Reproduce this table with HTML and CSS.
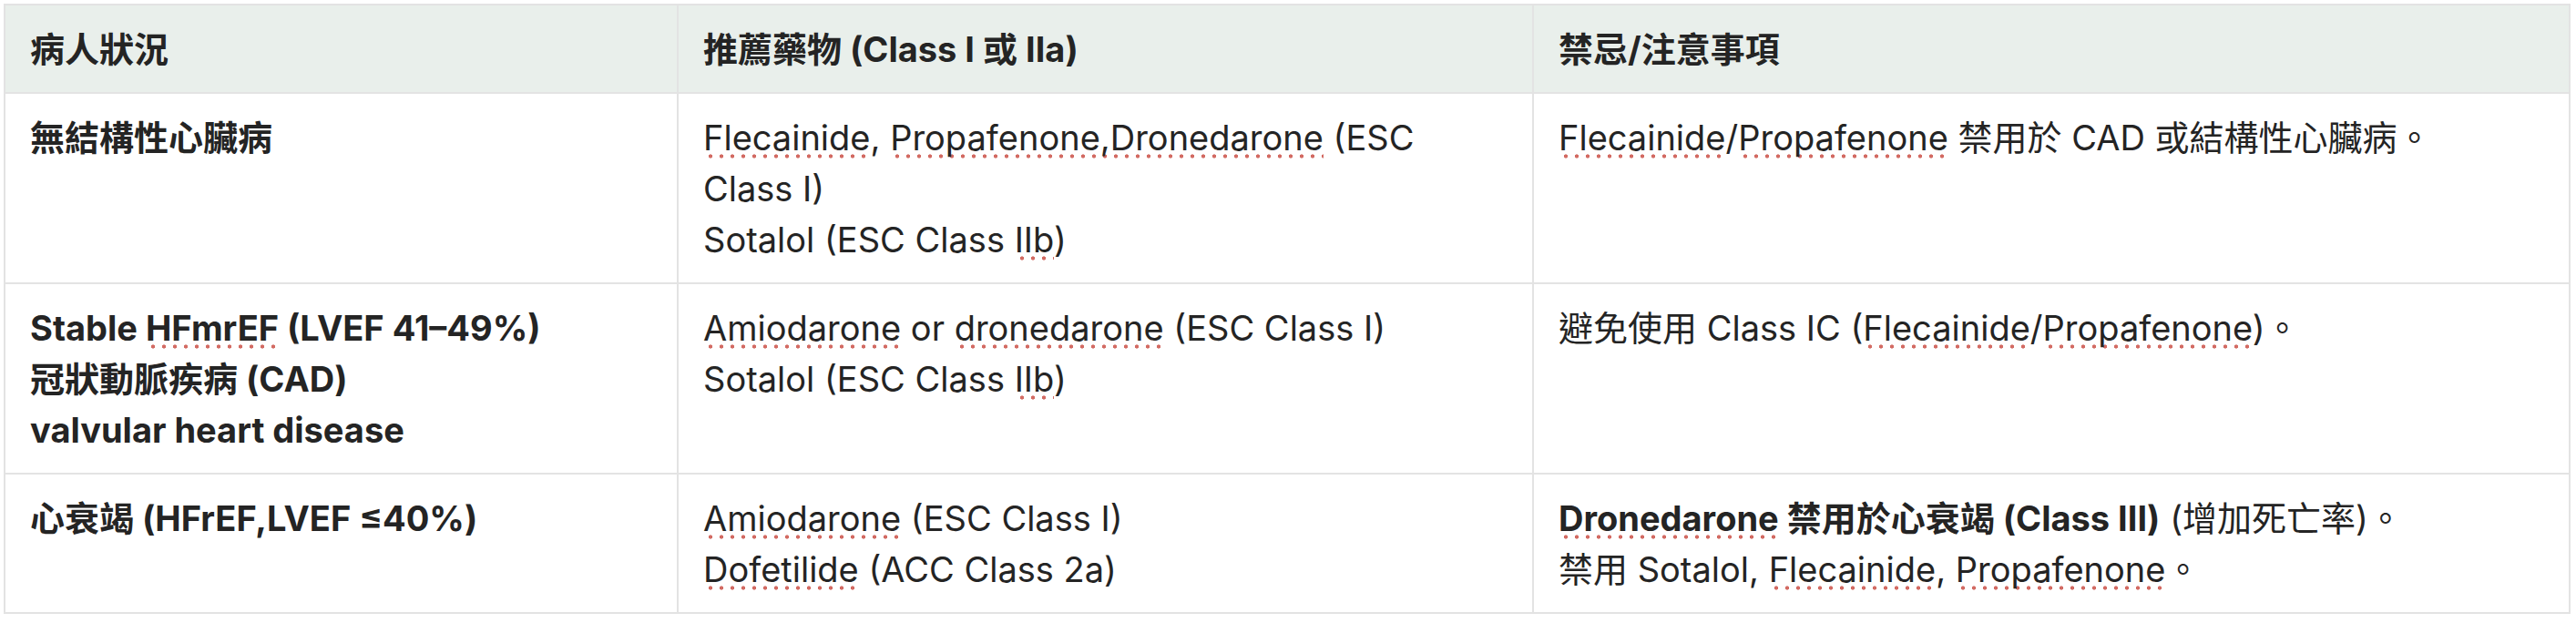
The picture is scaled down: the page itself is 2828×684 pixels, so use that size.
FILE: index.html
```html
<!DOCTYPE html>
<html lang="zh-Hant">
<head>
<meta charset="utf-8">
<title>Drug table</title>
<link rel="stylesheet" href="styles.css">
</head>
<body>
<table class="drug-table">
  <colgroup>
    <col class="c1">
    <col class="c2">
    <col class="c3">
  </colgroup>
  <thead>
    <tr>
      <th>病人狀況</th>
      <th>推薦藥物 (Class I 或 IIa)</th>
      <th>禁忌/注意事項</th>
    </tr>
  </thead>
  <tbody>
    <tr>
      <td class="cond">無結構性心臟病</td>
      <td><span class="sp">Flecainide</span>, <span class="sp">Propafenone,Dronedarone</span> <span>(ESC</span> <span>Class I)</span><br>Sotalol (ESC Class <span class="sp">IIb</span>)</td>
      <td><span class="sp">Flecainide</span>/<span class="sp">Propafenone</span> 禁用於 CAD 或結構性心臟病。</td>
    </tr>
    <tr>
      <td class="cond">Stable <span class="sp">HFmrEF</span> (LVEF 41–49%)<br>冠狀動脈疾病 (CAD)<br>valvular heart disease</td>
      <td><span class="sp">Amiodarone</span> or <span class="sp">dronedarone</span> (ESC Class I)<br>Sotalol (ESC Class <span class="sp">IIb</span>)</td>
      <td>避免使用 Class IC (<span class="sp">Flecainide</span>/<span class="sp">Propafenone</span>)。</td>
    </tr>
    <tr>
      <td class="cond">心衰竭 (HFrEF,LVEF ≤40%)</td>
      <td><span class="sp">Amiodarone</span> (ESC Class I)<br><span class="sp">Dofetilide</span> (ACC Class 2a)</td>
      <td><strong><span class="sp">Dronedarone</span> 禁用於心衰竭 (Class III)</strong> (增加死亡率)。<br>禁用 Sotalol, <span class="sp">Flecainide</span>, <span class="sp">Propafenone</span>。</td>
    </tr>
  </tbody>
</table>
</body>
</html>
```

FILE: styles.css
```css
html, body {
  background: #ffffff;
}
body {
  margin: 4px 0 0 4px;
  font-family: Inter, "Noto Sans CJK TC", sans-serif;
  color: #242424;
}
.drug-table {
  width: 2816px;
  table-layout: fixed;
  border-collapse: collapse;
  font-size: 38px;
  line-height: 56px;
}
.c1 { width: 739px; }
.c2 { width: 939px; }
.c3 { width: 1138px; }
.drug-table th,
.drug-table td {
  border: 2px solid #e3e3e3;
  padding: 20px 27px 19px;
  text-align: left;
  vertical-align: top;
}
.drug-table th {
  background: #e9efeb;
  font-weight: 700;
}
.drug-table td {
  font-weight: 400;
}
.drug-table td.cond {
  font-weight: 700;
}
.drug-table strong {
  font-weight: 700;
}
.sp {
  background-image: radial-gradient(circle, #d36b63 1.8px, rgba(211,107,99,0) 2.4px);
  background-size: 12px 5px;
  background-repeat: repeat-x;
  background-position: 2px 100%;
}
```
